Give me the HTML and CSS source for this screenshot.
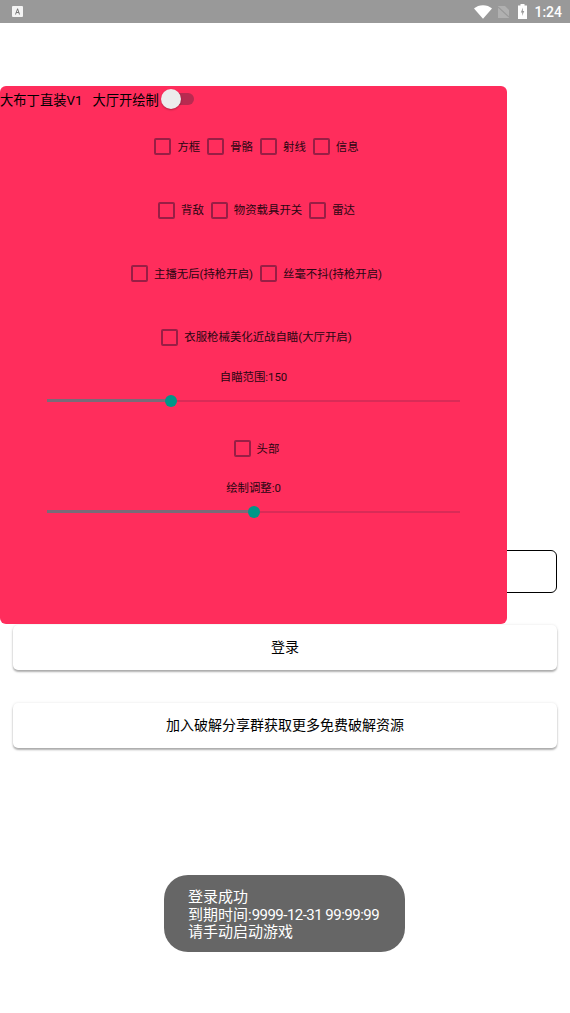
FILE: index.html
```html
<!DOCTYPE html>
<html lang="en">
  <head>
    <meta charset="UTF-8" />
    <title>登录</title>
    <link rel="stylesheet" href="styles.css">
  </head>
  <body>
    <div class="status-bar">
      <div class="status-left">
        <svg width="11" height="11" viewBox="0 0 11 11"><rect width="11" height="11" rx="1" fill="#f4f4f4"/><path d="M3 8.5 5.2 2.5h.8L8 8.5H7L6.5 7H4.5L4 8.5zM4.8 6h1.4L5.5 4z" fill="#777"/></svg>
      </div>
      <div class="status-right">
        <svg width="18" height="14" viewBox="0 0 18 14"><path d="M0 3.600C2.300 1.400 5.500.2 9 .2s6.700 1.200 9 3.400L9 13.800z" fill="#fff"/></svg>
        <svg class="sim" width="11" height="12" viewBox="0 0 11 12"><path d="M0 0h7l4 4v8H0z" fill="#b0b0b0"/><path d="M0 1 11 11" stroke="#999" stroke-width="1.200"/></svg>
        <svg class="battery" width="9" height="15" viewBox="0 0 9 15"><path d="M2.500 0h4v1.500H9V15H0V1.500h2.500z" fill="#fff"/><path d="M5 3.500 2.800 8.500h1.500L4 12 6.300 7H4.800z" fill="#999"/></svg>
        <span class="clock">1:24</span>
      </div>
    </div>

    <div class="login">
      <div class="login-input"></div>
      <button class="login-btn"><span class="btn-text">登录</span></button>
      <button class="login-btn join-btn"><span class="btn-text">加入破解分享群获取更多免费破解资源</span></button>
    </div>

    <div class="menu">
      <div class="menu-head">
        <span class="menu-title">大布丁直装V1</span>
        <span class="menu-hall">大厅开绘制</span>
        <span class="switch"><span class="switch-thumb"></span></span>
      </div>

      <div class="check-row row-first">
        <label class="check"><i class="box"></i><span>方框</span></label>
        <label class="check"><i class="box"></i><span>骨骼</span></label>
        <label class="check"><i class="box"></i><span>射线</span></label>
        <label class="check"><i class="box"></i><span>信息</span></label>
      </div>
      <div class="check-row">
        <label class="check"><i class="box"></i><span>背敌</span></label>
        <label class="check"><i class="box"></i><span>物资载具开关</span></label>
        <label class="check"><i class="box"></i><span>雷达</span></label>
      </div>
      <div class="check-row">
        <label class="check"><i class="box"></i><span>主播无后(持枪开启)</span></label>
        <label class="check"><i class="box"></i><span>丝毫不抖(持枪开启)</span></label>
      </div>
      <div class="check-row">
        <label class="check"><i class="box"></i><span>衣服枪械美化近战自瞄(大厅开启)</span></label>
      </div>

      <div class="slider-label label-first">自瞄范围:150</div>
      <div class="slider">
        <div class="slider-fill" style="width: 124px"></div>
        <div class="slider-thumb"></div>
        <div class="slider-rest"></div>
      </div>

      <div class="check-row row-head">
        <label class="check"><i class="box"></i><span>头部</span></label>
      </div>

      <div class="slider-label">绘制调整:0</div>
      <div class="slider">
        <div class="slider-fill" style="width: 207px"></div>
        <div class="slider-thumb"></div>
        <div class="slider-rest"></div>
      </div>
    </div>

    <div class="toast">登录成功<br>到期时间:<span class="toast-date">9999-12-31 99:99:99</span><br>请手动启动游戏</div>
  </body>
</html>
```

FILE: styles.css
```css
body {
  margin: 0;
  height: 1013px;
  position: relative;
  overflow: hidden;
  background-color: #fff;
  font-family: Roboto, "Noto Sans CJK SC", sans-serif;
  color: #000;
}
.status-bar {
  height: 23px;
  background-color: #999;
  display: flex;
  justify-content: space-between;
  align-items: center;
  padding: 0 8px 0 12px;
}
.status-left {
  display: flex;
}
.status-right {
  display: flex;
  align-items: center;
  color: #fff;
}
.sim {
  margin-left: 6px;
}
.battery {
  margin-left: 9px;
}
.clock {
  margin-left: 7px;
  font-size: 14px;
  font-weight: 500;
}
.login {
  padding: 527px 13px 0;
  display: flex;
  flex-direction: column;
}
.login-input {
  height: 41px;
  border: 1px solid #000;
  border-radius: 6px;
  background-color: #fff;
}
.login-btn {
  height: 45px;
  margin-top: 32px;
  padding: 0 0 4px;
  border: 0;
  border-radius: 5px;
  background-color: #fff;
  font-family: inherit;
  font-size: 14px;
  color: #000;
  box-shadow: 0 2px 2px rgba(0, 0, 0, 0.3), 0 0 3px rgba(0, 0, 0, 0.1);
}
.join-btn {
  margin-top: 33px;
}
.menu {
  position: absolute;
  left: 0;
  top: 86px;
  width: 507px;
  height: 538px;
  background-color: #ff2d5c;
  border-radius: 6px;
  display: flex;
  flex-direction: column;
}
.menu-head {
  height: 26px;
  display: flex;
  align-items: center;
  font-size: 13.3px;
}
.menu-hall {
  margin-left: 10px;
}
.switch {
  position: relative;
  width: 29px;
  height: 12px;
  margin-left: 6px;
  border-radius: 6px;
  background-color: #b82a50;
}
.switch-thumb {
  position: absolute;
  left: -4px;
  top: -4px;
  width: 20px;
  height: 20px;
  border-radius: 50%;
  background-color: #ececec;
  box-shadow: 0 1px 2px rgba(0, 0, 0, 0.3);
}
.check-row {
  margin-top: 44.67px;
  height: 19px;
  padding-left: 6px;
  display: flex;
  justify-content: center;
  gap: 7px;
  font-size: 11.4px;
}
.row-first {
  margin-top: 25px;
}
.row-head {
  margin-top: 31.5px;
}
.check {
  display: flex;
  align-items: center;
  color: #2a0612;
}
.check span {
  margin-bottom: 2px;
}
.box {
  box-sizing: border-box;
  width: 17px;
  height: 17px;
  margin-right: 6px;
  border: 2px solid #981e45;
  border-radius: 2px;
}
.slider-label {
  margin-top: 20.5px;
  height: 18px;
  line-height: 18px;
  text-align: center;
  font-size: 11.4px;
  color: #2a0612;
}
.label-first {
  margin-top: 21px;
}
.slider {
  display: flex;
  align-items: center;
  height: 14px;
  margin: 8px 47px 0;
  width: 413px;
}
.slider-fill {
  height: 3px;
  background-color: #7a6a78;
}
.slider-thumb {
  flex: none;
  width: 12px;
  height: 12px;
  margin: 0 -6px;
  border-radius: 50%;
  background-color: #009688;
  position: relative;
}
.slider-rest {
  flex: 1;
  height: 2px;
  background-color: #d92b57;
}
.toast {
  position: absolute;
  left: 164px;
  top: 875px;
  box-sizing: border-box;
  width: 241px;
  height: 77px;
  padding: 14px 10px 0 24px;
  border-radius: 24px;
  background-color: #666;
  color: #fff;
  font-size: 15px;
  line-height: 17.5px;
  white-space: nowrap;
}
.toast-date {
  letter-spacing: -0.52px;
}
```
